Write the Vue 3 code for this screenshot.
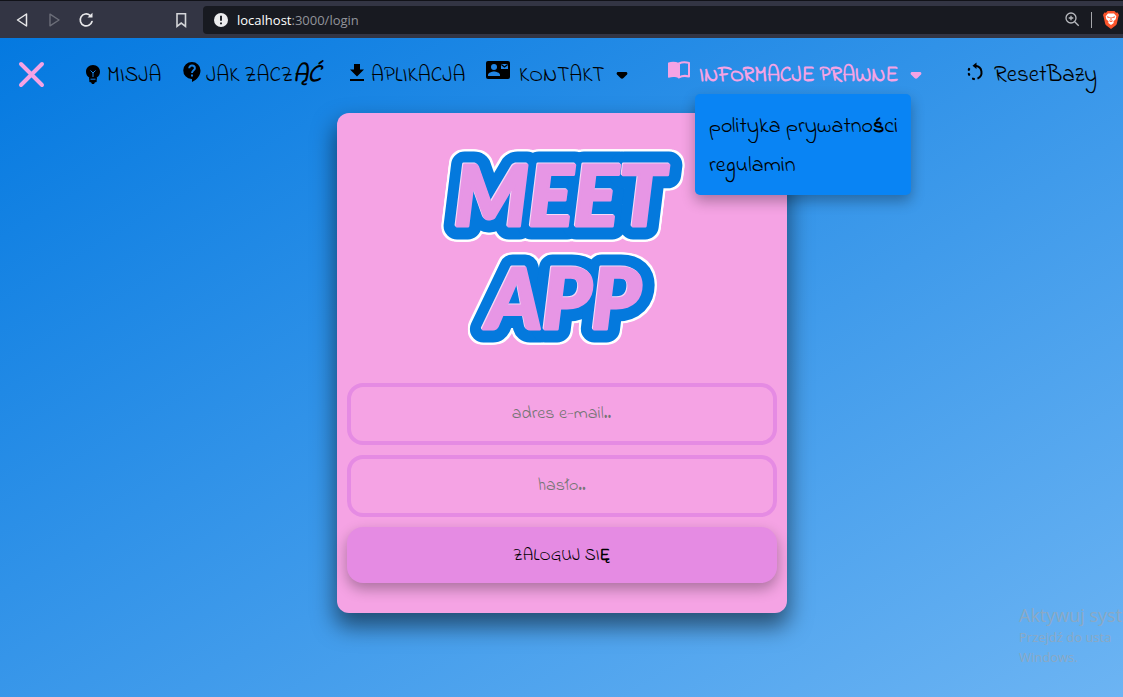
<script setup>
import { ref } from 'vue'

const email = ref('')
const password = ref('')
</script>

<template>
  <div class="window">
    <header class="browser">
      <div class="controls">
        <button type="button" aria-label="Wstecz">
          <svg width="16" height="16" viewBox="0 0 16 16"><path d="M12.500 2v12L3.500 8z" fill="none" stroke="#e8e8ea" stroke-width="1.5" stroke-linejoin="round" /></svg>
        </button>
        <button type="button" aria-label="Dalej">
          <svg width="16" height="16" viewBox="0 0 16 16"><path d="M4 2.200v11.600L13 8z" fill="none" stroke="#6c6e79" stroke-width="1.4" stroke-linejoin="round" /></svg>
        </button>
        <button type="button" aria-label="Odśwież">
          <svg width="16" height="16" viewBox="0 0 16 16"><path d="M12 3.300A6 6 0 1 0 14 9.500" fill="none" stroke="#e8e8ea" stroke-width="1.7" stroke-linecap="round" /><path d="M9.500 5.500h5V.8z" fill="#e8e8ea" /></svg>
        </button>
      </div>
      <button type="button" class="bookmark" aria-label="Zakładka">
        <svg width="16" height="16" viewBox="0 0 16 16"><path d="M4 1.800h8.500v12.500L8.200 11 4 14.300z" fill="none" stroke="#d4d5d9" stroke-width="1.6" /></svg>
      </button>
      <div class="address">
        <svg width="14" height="14" viewBox="0 0 14 14"><circle cx="7" cy="7" r="7" fill="#ececee" /><path d="M7 2.800v5M7 9.500v1.800" stroke="#181a21" stroke-width="1.900" /></svg>
        <span class="url"><b>localhost</b>:3000/login</span>
        <svg class="magnify" width="15" height="15" viewBox="0 0 15 15" fill="none" stroke="#b8babf" stroke-width="1.300"><circle cx="6" cy="6" r="5" /><path d="M9.700 9.700l4 4M6 3.700v4.600M3.700 6h4.600" /></svg>
        <span class="divider"></span>
        <svg width="16" height="18" viewBox="0 0 16 18">
          <path d="M4.500 0h7L13 1.800l1.600-.2L16 4l-.5 1.500-1.700 7.300c-.2.800-.6 1.300-1.200 1.800L8 18l-4.600-3.400c-.6-.5-1-1-1.200-1.800L.5 5.500 0 4l1.400-2.400 1.600.2z" fill="#fb542b" />
          <path d="M5 2.500h6l2.300 2.700-.6 3-2.200 2.100.2 1.600L8 14l-2.700-2.100.2-1.600-2.200-2.100-.6-3z" fill="#fff" />
          <path d="M4 5.800l2.700.8M12 5.800l-2.700.8M8 6v3.500M6.300 9.800L8 10.600l1.700-.8" stroke="#fb542b" fill="none" />
        </svg>
      </div>
    </header>

    <main class="page">
      <nav class="nav">
        <button type="button" class="close" aria-label="Zamknij menu">
          <svg width="27" height="27" viewBox="0 0 27 27"><path d="M3 3l21 21M24 3L3 24" stroke="#f5a3e4" stroke-width="4" stroke-linecap="round" /></svg>
        </button>
        <div class="items">
          <a class="item" href="#misja">
            <svg class="icon" width="20" height="20" viewBox="0 0 20 20"><path d="M10 1C5.800 1 3 4 3 7.700c0 2.700 1.300 4.500 3.200 5.700v1.800h7.600v-1.800c1.900-1.200 3.200-3 3.200-5.700C17 4 14.200 1 10 1z" /><path d="M6.300 14h7.400v3.300c0 .6-.5 1-1 1H12L11 20H9l-1-1.700h-.7c-.5 0-1-.4-1-1z" /><path d="M7.500 6.500L10 9l2.500-2.500M10 9v4M7.500 15.200h5" fill="none" stroke="#1680e2" stroke-width="1" /></svg>
            <span>MISJA</span>
          </a>
          <a class="item" href="#start">
            <svg class="icon high" width="20" height="22" viewBox="0 0 20 22"><path d="M10 1a8.500 8.500 0 0 0-.5 17h.5v3c5-2.200 8.500-6.500 8.500-11.500A8.500 8.500 0 0 0 10 1z" /><path d="M7.200 7.300C7.200 5.500 8.500 4.500 10 4.500s2.900 1 2.900 2.700c0 2.100-2.900 2.200-2.900 4.800M10 13.500v2" fill="none" stroke="#1680e2" stroke-width="1.900" /></svg>
            <span>JAK ZACZ<b>ĄĆ</b></span>
          </a>
          <a class="item" href="#aplikacja">
            <svg class="icon high" width="20" height="20" viewBox="0 0 20 20"><path d="M7 2h6v5.500h4L10 14.500 3 7.500h4zM3 17h14v2H3z" /></svg>
            <span>APLIKACJA</span>
          </a>
          <a class="item" href="#kontakt">
            <svg class="icon raised" width="26" height="20" viewBox="0 0 26 20"><path d="M3 1h20a2 2 0 0 1 2 2v14a2 2 0 0 1-2 2H3a2 2 0 0 1-2-2V3a2 2 0 0 1 2-2z" /><g class="cutout"><circle cx="9" cy="7" r="3" /><path d="M3 16v-1c0-2.200 4-3.400 6-3.400s6 1.200 6 3.400v1z" /><path d="M16 4h7v5h-7z" /></g><path d="M16.300 4.500l3.200 2.500 3.200-2.500" fill="none" stroke="#000" stroke-width="1.300" /></svg>
            <span>KONTAKT</span>
            <svg class="caret" width="12" height="7" viewBox="0 0 12 7"><path d="M1.500 0h9Q12 1 11 2.500L7.500 6Q6 7.500 4.500 6L1 2.500Q0 1 1.500 0z" /></svg>
          </a>
          <div class="item active">
            <a class="item" href="#prawo">
              <svg class="icon raised" width="24" height="18" viewBox="0 0 24 18"><path d="M12 2C8.500.3 4.500.3 1.500 1.500Q1 1.700 1 2.300V16q0 .9.900.7C5 15.600 9 15.700 12 17.300z" /><path class="line" d="M12 2.500c3-1.600 6.500-1.600 10-.6v13.600c-3.500-1-7-.8-10 .9z" stroke="#f5a3e4" stroke-width="2" stroke-linejoin="round" /></svg>
              <span>INFORMACJE PRAWNE</span>
              <svg class="caret" width="12" height="7" viewBox="0 0 12 7"><path d="M1.500 0h9Q12 1 11 2.500L7.500 6Q6 7.500 4.500 6L1 2.500Q0 1 1.500 0z" /></svg>
            </a>
            <div class="menu">
              <a href="#polityka">polityka prywatno<b>ś</b>ci</a>
              <a href="#regulamin">regulamin</a>
            </div>
          </div>
          <a class="item" href="#reset">
            <svg class="icon high" width="22" height="20" viewBox="0 0 22 20"><path d="M10.500 3.800a6.700 6.700 0 0 1 2 12.800" fill="none" stroke="#000" stroke-width="2" /><path d="M11.500.500v6.500L7.500 3.800z" /><path d="M9 17l-1-.3M4.200 12.800l-.4-.9M3.800 7.800l.3-.8" fill="none" stroke="#000" stroke-width="2.200" stroke-linecap="round" /></svg>
            <span class="reset">ResetBazy</span>
          </a>
        </div>
      </nav>

      <form class="card" @submit.prevent>
        <svg class="logo" viewBox="0 0 260 200" role="img" aria-label="MEET APP">
          <g class="outline">
            <g id="logo-words">
              <text x="128" y="83">MEET</text>
              <text x="132" y="186">APP</text>
            </g>
          </g>
          <use class="face" href="#logo-words" />
        </svg>
        <input v-model="email" type="email" placeholder="adres e-mail.." aria-label="adres e-mail">
        <input v-model="password" type="password" placeholder="hasło.." aria-label="hasło">
        <button type="submit" class="submit">ZALOGUJ SI<b>Ę</b></button>
      </form>

      <aside class="watermark">
        <p class="title">Aktywuj syst</p>
        <p>Przejdź do usta</p>
        <p>Windows.</p>
      </aside>
    </main>
  </div>
</template>

<style>
body {
  margin: 0;
}
</style>

<style scoped>
* {
  box-sizing: border-box;
}
.window {
  display: flex;
  flex-direction: column;
  min-height: 100vh;
  font-family: "Indie Flower", Lato, sans-serif;
}
button {
  border: 0;
  padding: 0;
  background: none;
  color: inherit;
  font: inherit;
  cursor: pointer;
}
svg {
  display: block;
  flex: none;
}
.browser {
  display: flex;
  align-items: center;
  height: 38px;
  padding-left: 14px;
  background: #333544;
  border-top: 1px solid #111218;
}
.controls {
  display: flex;
  gap: 16px;
}
.bookmark {
  margin-left: 79px;
  margin-right: 14px;
}
.address {
  display: flex;
  flex: 1;
  align-items: center;
  height: 28px;
  padding: 0 4px 0 11px;
  border-radius: 4px 0 0 4px;
  background: #181a21;
}
.url {
  flex: 1;
  margin-left: 9px;
  color: #92949b;
  font: 13px/20px "Open Sans", sans-serif;
}
.url b {
  color: #fff;
  font-weight: 400;
}
.divider {
  width: 1px;
  height: 16px;
  margin: 0 11px;
  background: #a5a6ab;
}
.page {
  position: relative;
  flex: 1;
  overflow: hidden;
  background: linear-gradient(to bottom right, #0479e0, #6cb4f3);
}
.nav {
  display: flex;
  align-items: center;
  height: 72px;
  padding: 0 0 0 18px;
}
.close {
  margin-right: 38px;
}
.items {
  display: grid;
  flex: 1;
  grid-template-columns: 99fr 165fr 138fr 182fr 298fr 158fr;
}
.item {
  display: flex;
  position: relative;
  align-items: center;
  color: #000;
  font-size: 21px;
  line-height: 28px;
  text-decoration: none;
  white-space: nowrap;
}
.item span {
  margin-top: 3px;
}
.item span b {
  font-size: 24px;
  font-style: italic;
  line-height: 24px;
}
.icon {
  margin-right: 4px;
}
.high {
  margin-bottom: 4px;
}
.raised {
  margin-right: 8px;
  margin-bottom: 8px;
}
.caret {
  margin: 3px 0 0 12px;
}
.item svg {
  fill: currentColor;
}
.item svg .cutout {
  fill: #2185e4;
}
.item svg .line {
  fill: none;
}
.item .reset {
  margin-left: 3px;
  font-size: 23px;
}
.active,
.active > .item {
  color: #f5a3e4;
  font-weight: 700;
}
.menu {
  display: flex;
  position: absolute;
  z-index: 2;
  top: 35px;
  left: 28px;
  flex-direction: column;
  width: 216px;
  padding: 14px 14px 9px;
  border-radius: 5px;
  background: #0984f4;
  box-shadow: 0 6px 14px rgba(0, 0, 0, 0.3);
}
.menu a {
  color: #000;
  font-size: 22px;
  font-weight: 400;
  line-height: 39px;
  text-decoration: none;
}
.card {
  display: flex;
  flex-direction: column;
  gap: 10px;
  width: calc(100% - 24px);
  max-width: 450px;
  margin: 3px auto 0;
  padding: 30px 10px;
  border-radius: 12px;
  background: #f5a3e4;
  box-shadow: 0 12px 22px 2px rgba(0, 0, 0, 0.5);
}
.logo {
  width: 260px;
  max-width: 100%;
  margin: 0 auto 30px;
  overflow: visible;
  font: italic 900 84px Lato, sans-serif;
  text-anchor: middle;
}
.outline {
  fill: #0479dd;
  stroke: #0479dd;
  stroke-width: 27px;
  stroke-linejoin: round;
  filter: drop-shadow(2px 0 0 #fff) drop-shadow(-2px 0 0 #fff) drop-shadow(0 2px 0 #fff) drop-shadow(0 -2px 0 #fff);
}
.face {
  fill: #e796e5;
  stroke: #e796e5;
  stroke-width: 3px;
  stroke-linejoin: round;
  filter: drop-shadow(-1px -1px 0 #f7d9f7);
}
input {
  width: 100%;
  height: 62px;
  padding: 0 16px;
  border: 4px solid #e58be3;
  border-radius: 16px;
  outline: 0;
  background: transparent;
  color: #000;
  font: inherit;
  font-size: 18px;
  text-align: center;
}
input::placeholder {
  color: #757575;
  opacity: 1;
}
.submit {
  height: 56px;
  border-radius: 16px;
  background: #e58be3;
  box-shadow: 0 6px 14px rgba(0, 0, 0, 0.3);
  color: #000;
  font-size: 17px;
}
.watermark {
  position: absolute;
  right: 0;
  bottom: 30px;
  width: 104px;
  color: #8ba9c4;
  font: 13px/20px "Open Sans", sans-serif;
  white-space: nowrap;
  pointer-events: none;
}
.watermark p {
  margin: 0;
}
.watermark .title {
  font-size: 18px;
  line-height: 24px;
}
</style>
